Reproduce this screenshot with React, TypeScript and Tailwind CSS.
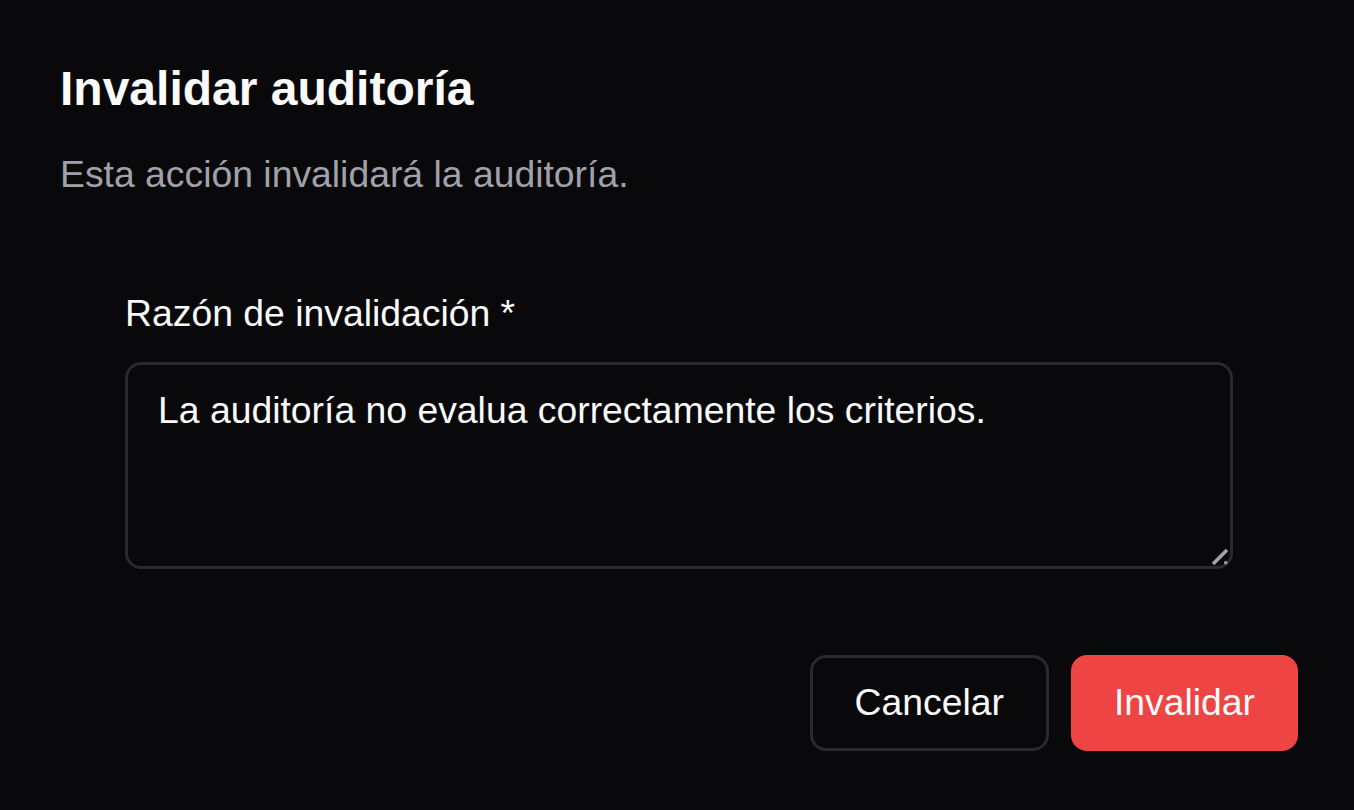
export default function App() {
  return (
    <div className="min-h-screen bg-[#09090b] pl-[60px] pr-[56px] pt-[65px] font-['Liberation_Sans',Arial,sans-serif] text-[#fafafa]">
      <h2 className="text-[48px] font-bold leading-[48px]">Invalidar auditoría</h2>
      <p className="mt-[35px] text-[37.33px] leading-[53.33px] text-[#a1a1aa]">
        Esta acción invalidará la auditoría.
      </p>

      <div className="mt-[86px] pl-[65px] pr-[65px]">
        <label className="block text-[37.33px] leading-[53.33px]">Razón de invalidación *</label>
        <div className="relative mt-[21px]">
          <textarea
            defaultValue="La auditoría no evalua correctamente los criterios."
            className="block h-[207px] w-full resize-none rounded-[16px] border-[3px] border-[#2a2a2e] bg-transparent px-[30px] pt-[19px] text-[37.33px] leading-[53.33px] text-[#fafafa] outline-none"
          />
          <svg
            className="pointer-events-none absolute bottom-[3px] right-[3px]"
            width="20"
            height="20"
            viewBox="0 0 20 20"
          >
            <line x1="3" y1="18" x2="17" y2="4" stroke="#a3a3a3" strokeWidth="3.5" />
            <rect x="14.2" y="15.2" width="3" height="3" fill="#a3a3a3" />
          </svg>
        </div>
      </div>

      <div className="mt-[86px] flex justify-end gap-[22px]">
        <button className="h-[96px] rounded-[16px] border-[3px] border-[#2a2a2e] bg-[#09090b] px-[42px] text-[37.33px] text-[#fafafa]">
          Cancelar
        </button>
        <button className="h-[96px] rounded-[16px] bg-[#ef4444] px-[43px] text-[37.33px] text-[#fafafa]">
          Invalidar
        </button>
      </div>
    </div>
  );
}
